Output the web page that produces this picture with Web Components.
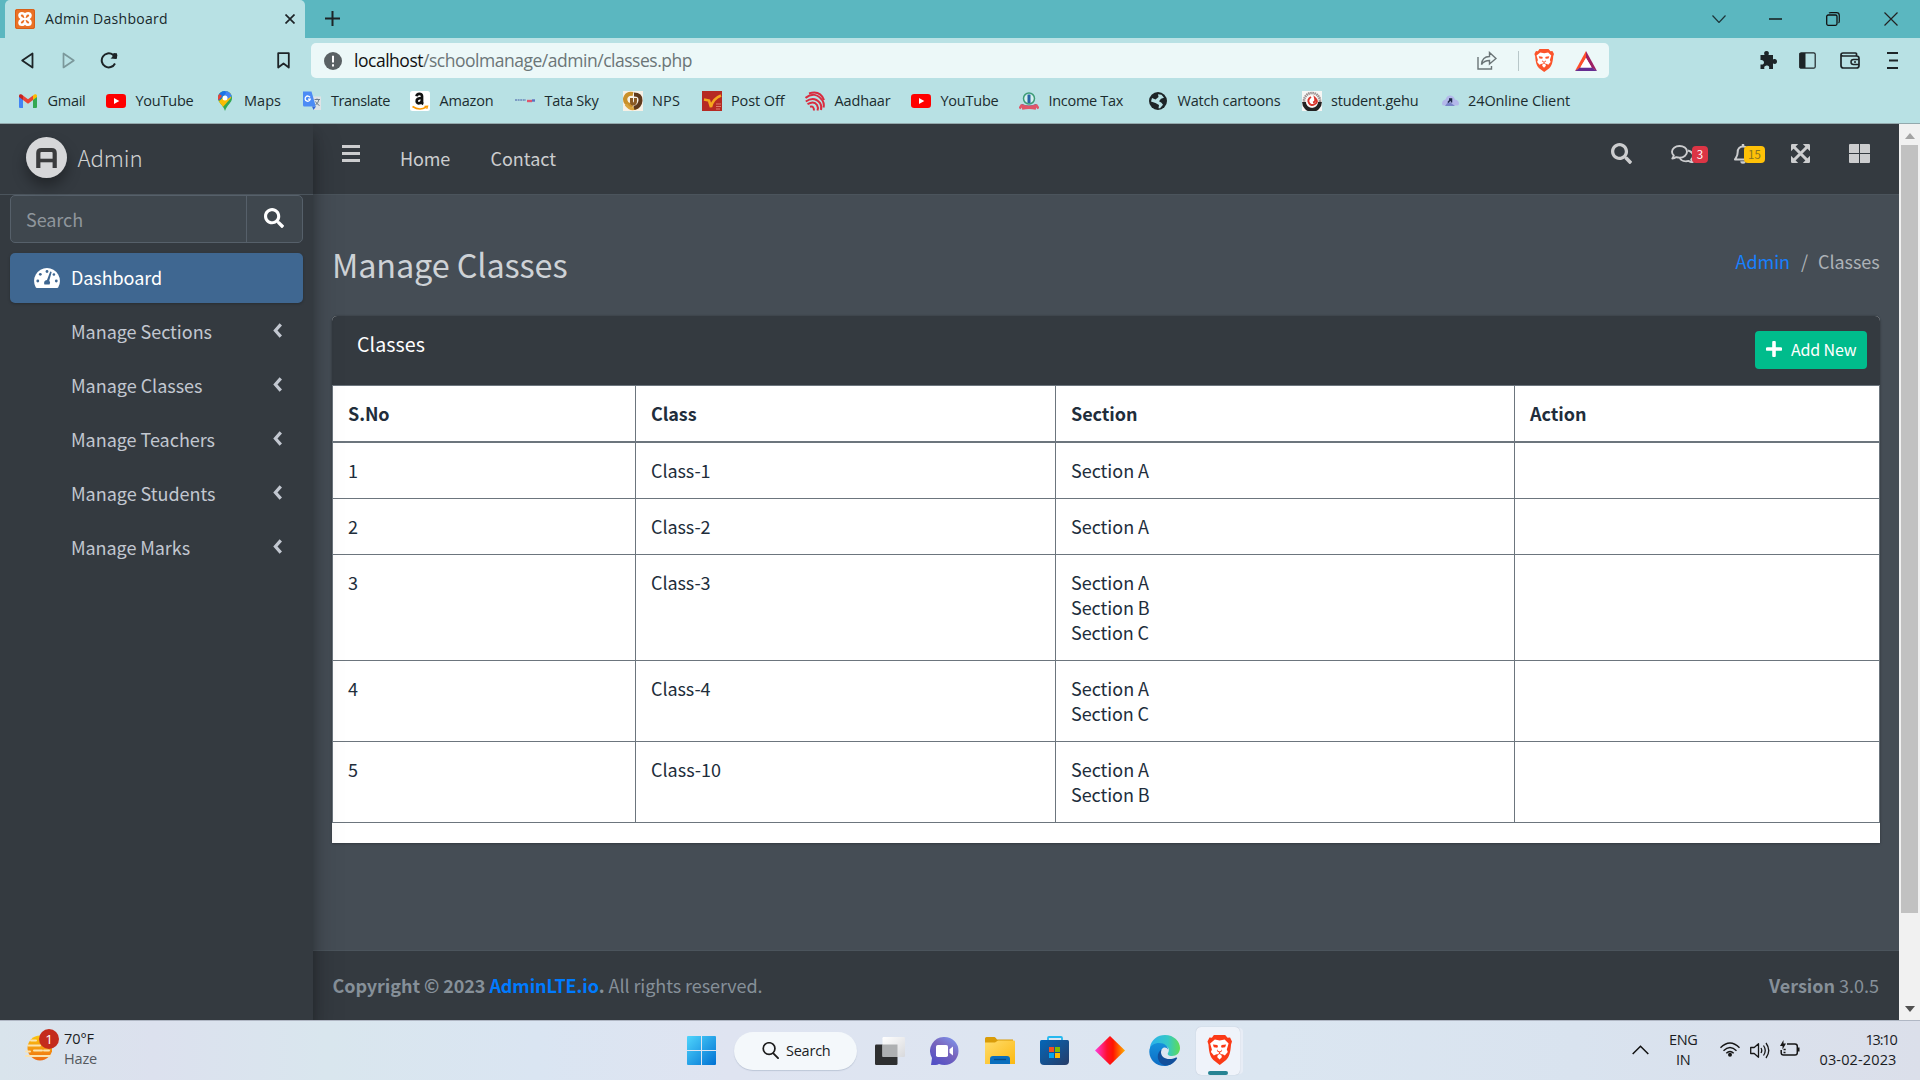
<!DOCTYPE html>
<html lang="en">
<head>
<meta charset="utf-8">
<title>Admin Dashboard</title>
<style>
html,body{margin:0;padding:0}
body{width:1920px;height:1080px;overflow:hidden;font-family:"Noto Sans CJK SC","Open Sans",sans-serif;font-size:18px;background:#454d55}
</style>
</head>
<body>
<desktop-screen></desktop-screen>
<script>
const UI = '"Open Sans","Noto Sans",sans-serif';

function define(name, css, html, after) {
  customElements.define(name, class extends HTMLElement {
    connectedCallback() {
      if (this.shadowRoot) return;
      const root = this.attachShadow({ mode: 'open' });
      root.innerHTML = '<style>:host{display:block;box-sizing:border-box}*{box-sizing:border-box}' + css + '</style>' +
        (typeof html === 'function' ? html(this) : html);
      if (after) after(this, root);
    }
  });
}

/* A single line of text tracked to an exact width. */
define('fit-text', ':host{display:inline-block;white-space:pre;flex:none}', '<span><slot></slot></span>', (el, root) => {
  const w = +el.getAttribute('w');
  const span = root.querySelector('span');
  const natural = span.getBoundingClientRect().width;
  span.style.letterSpacing = ((w - natural) / el.textContent.length).toFixed(3) + 'px';
  el.style.width = w + 'px';
});

const lion = (f) => `<path fill="${f}" d="M7 0h11.500l2.500 2.800 2.500-.3 2 4-1 3c-.5 8-2 12.500-5 15.500l-6.500 5-6.500-5c-3-3-4.500-7.500-5-15.500l-1-3 2-4 2.500.3z"/>
<path fill="#fff" d="M8 4.500l5 1 5-1 4 4-1.800 6 1 2.500-3 3.500-2.200-1.200-1.500 1.200.8 1.500-2.500 2.500-2.500-2.500.8-1.500-1.500-1.200L7 20.500 4 17l1-2.500-1.800-6z"/>
<path fill="${f}" d="M6 9.500l4.500.5.7 1.200-.7 1.600-3.500-.5zM19.500 9.500l-4.500.5-.7 1.200.7 1.600 3.500-.5zM10.800 14l-.8 2 2.800 1.800L15.500 16l-.8-2 .2 1.400-2.100 1.200-2.100-1.200z"/><path fill="none" stroke="${f}" stroke-width=".9" d="M12.800 17v2M9.500 20.200l3.300-1.500 3.300 1.500"/>`;

const icons = {
  xampp: ['0 0 20 20', '<rect width="20" height="20" rx="2" fill="#ea7125"/><rect x=".5" y=".5" width="19" height="19" rx="2" fill="none" stroke="#d65f18"/><path transform="rotate(90 10 10)" fill="none" stroke="#fff" stroke-width="2.600" d="M6.500 4.500C3.500 4.500 3.500 9 6.500 10c-3 1-3 5.500 0 5.500 2 0 2-1.500 3.500-3 1.500 1.500 1.500 3 3.500 3 3 0 3-4.500 0-5.500 3-1 3-5.500 0-5.500-2 0-2 1.500-3.500 3-1.500-1.500-1.500-3-3.500-3z"/><path stroke="#fff" stroke-width="2.200" d="M7.500 10h5"/>'],
  close: ['0 0 10 10', '<path stroke="#1d2427" stroke-width="1.700" d="M.5.5l9 9M9.500.5l-9 9"/>'],
  plus: ['0 0 15 15', '<path stroke="#1d2427" stroke-width="2" d="M7.500 0v15M0 7.500h15"/>'],
  chevDown: ['0 0 14 8', '<path fill="none" stroke="#1d3438" stroke-width="1.200" d="M.5.5L7 7.500 13.500.5"/>'],
  min: ['0 0 13 2', '<path stroke="#111" stroke-width="1.400" d="M0 1h13"/>'],
  max: ['0 0 14 14', '<rect x=".7" y="3" width="10.300" height="10.300" rx="1.500" fill="none" stroke="#111" stroke-width="1.300"/><path fill="none" stroke="#111" stroke-width="1.200" d="M3 1.200Q3.500.7 5 .7h5.500q2.800 0 2.800 2.800V9q0 1.500-.8 2"/>'],
  winX: ['0 0 14 14', '<path stroke="#222" stroke-width="1.200" d="M.5.5l13 13M13.500.5l-13 13"/>'],
  back: ['0 0 13 17', '<path fill="none" stroke="#1d2427" stroke-width="1.800" stroke-linejoin="round" d="M11.500 1.500v14L1.200 8.500z"/>'],
  fwd: ['0 0 13 17', '<path fill="none" stroke="#7b989b" stroke-width="1.700" stroke-linejoin="round" d="M1.500 1.500v14L11.800 8.500z"/>'],
  reload: ['0 0 18 17', '<path fill="none" stroke="#1d2427" stroke-width="2" d="M13 2.800A7 7 0 1 0 15 11.500"/><path fill="#1d2427" d="M10.500 6.500L17 1v5q0 1-1 1z"/><circle cx="14.800" cy="3.600" r="2.500" fill="#1d2427"/>'],
  mark: ['0 0 13 17', '<path fill="none" stroke="#1d2427" stroke-width="1.800" stroke-linejoin="round" d="M1.200 1.200h10.600v14.300L6.500 11.500 1.200 15.500z"/>'],
  info: ['0 0 18 18', '<circle cx="9" cy="9" r="9" fill="#5a6164"/><path stroke="#fff" stroke-width="2" d="M9 3.800v6.700M9 12.200v2.200"/>'],
  share: ['0 0 20 19', '<path fill="none" stroke="#6b7577" stroke-width="1.400" d="M1 6v12h13.500v-3M4.500 13.500C5 8 8 5.500 12.500 5.500V1.500L19 7.500l-6.500 5.500V9.500c-3.500 0-6 1-8 4z"/>'],
  bat: ['0 0 22 20', '<path fill="#ff4f2b" d="M11 0v7L5 17l-5 3z"/><path fill="#9e1f63" d="M11 0l11 20-5-3-6-10z"/><path fill="#662d91" d="M0 20l5-3.500h12l5 3.500z"/><path fill="#fff" d="M11 7l5.500 9.500h-11z"/>'],
  puzzle: ['0 0 18 18', '<path fill="#1d2427" d="M1.500 4H5.500C4.500 1.500 5.500 0 7.500 0s3 1.500 2 4H14v4.500c2.500-1 4 0 4 2s-1.500 3-4 2V18h-4c.8-2.500-.5-3.500-2-3.500S4.500 15.500 5.500 18h-4v-4.500C4 14 5 12.800 5 11.300S3.500 8.500 1.500 9z"/>'],
  panel: ['0 0 17 17', '<rect x=".8" y=".8" width="15.400" height="15.400" rx="1.500" fill="none" stroke="#1d2427" stroke-width="1.200"/><path fill="#1d2427" d="M.5 1h6v15h-6z"/>'],
  wallet: ['0 0 20 17', '<path fill="none" stroke="#1d2427" stroke-width="1.700" stroke-linejoin="round" d="M16.500 4V2q0-1-1-1H3Q1 1 1 3v10.500q0 2.500 2.500 2.500h13q2.500 0 2.500-2.500V6.500Q19 4 16.500 4H3Q1 4 1 2.700"/><path fill="none" stroke="#1d2427" stroke-width="1.500" d="M19 7.500h-5.500q-2.500 0-2.500 2.500t2.500 2.500H19"/><path stroke="#1d2427" stroke-width="1.500" d="M14 10h2"/>'],
  menu: ['0 0 11 17', '<path stroke="#1d2427" stroke-width="1.800" d="M0 1h11M2 8.500h9M0 16h11"/>'],
  brave: ['0 0 25.500 30', lion('#fb542b')],
  gmail: ['0 0 18 14', '<path fill="#4285f4" d="M0 2v11q0 1 1 1h3V5z"/><path fill="#34a853" d="M18 2v11q0 1-1 1h-3V5z"/><path fill="#fbbc04" d="M14 6V1.500C15.500-.3 18-.3 18 2v1z"/><path fill="#c5221f" d="M4 6V1.500C2.500-.3 0-.3 0 2v1z"/><path fill="#ea4335" d="M4 1.500L9 5.300l5-3.800V6L9 9.800 4 6z"/>'],
  youtube: ['0 0 20 14', '<rect width="20" height="14" rx="3.200" fill="#f00"/><path fill="#fff" d="M8 4l5.300 3L8 10z"/>'],
  maps: ['0 0 14 20', '<defs><clipPath id="m"><path d="M7 0C3 0 0 3 0 7c0 5 5 6.500 7 13 2-6.500 7-8 7-13 0-4-3-7-7-7z"/></clipPath></defs><g clip-path="url(#m)"><path fill="#34a853" d="M0 0h14v20H0z"/><path fill="#fbbc04" d="M0 11L13 0v7L4 17z"/><path fill="#4285f4" d="M5 0h9v5l-6 4z"/><path fill="#1a73e8" d="M0 0h7l1 2-6 7H0z"/><path fill="#ea4335" d="M0 2l4 3-4 5z"/></g><circle cx="7" cy="7" r="2.500" fill="#fff"/>'],
  translate: ['0 0 20 20', '<path fill="#dfe3e6" d="M8 5.500h11V19H11z"/><path fill="#4c8bf5" d="M1 .5h8.500l4.300 15H2.300Q1 15.500 1 14z"/><path fill="#3367d6" d="M10 15.500h4L11.500 19z"/><path fill="none" stroke="#fff" stroke-width="1.300" d="M8 6.300A2.600 2.600 0 1 0 8.300 8.200H6"/><path fill="none" stroke="#6d7b8a" stroke-width="1" d="M12.500 8.500h5.500M15 7.500v1M17 8.500q-1 4-3.500 5.500M13.500 10.500q1.500 3 4 4"/>'],
  amazon: ['0 0 20 20', '<rect width="20" height="20" rx="2.500" fill="#fff"/><path fill="none" stroke="#111" stroke-width="2.700" d="M6.500 5.300C7 2 12 2 12 5v6q0 1.500 1.300 2M12 7C8 7 6.500 8.500 6.700 10.300c.2 3 4.800 2.700 5.300-1.300"/><path fill="none" stroke="#f90" stroke-width="1.600" d="M2.500 15.500q7 4.500 13.500.8"/><path stroke="#f90" stroke-width="1.400" fill="none" d="M14.500 15.500l3-.2-.8 2.500"/>'],
  tata: ['0 0 20 5', '<path stroke="#7d9cc4" stroke-width="2" stroke-dasharray="2 .6" d="M0 2h11"/><path stroke="#e0566d" stroke-width="2.400" d="M12 3h5"/><path stroke="#5b6fc0" stroke-width="2.400" d="M17 2.500h3"/>'],
  nps: ['0 0 20 20', '<rect width="20" height="20" fill="#f7f1e6"/><path fill="none" stroke="#c9902a" stroke-width="4.200" d="M10 3C3 1.500.5 8 3.500 12q2.500 3 6 1.500"/><path fill="none" stroke="#d9a33c" stroke-width="3" d="M3 13.500Q8 20.500 15 16"/><path fill="none" stroke="#5f3a1c" stroke-width="4" d="M11 3.500q7 0 6.500 6T11 17"/><path fill="none" stroke="#8a5a24" stroke-width="3" d="M8.500 7v4q0 2.500 2 2t2-3V7"/>'],
  post: ['0 0 20 20', '<rect width="20" height="20" fill="#b62a23"/><path fill="none" stroke="#f4a61e" stroke-width="2.600" d="M2 8.500l5 1 2 6.500C10 11 14 6.500 19 4.500"/><path stroke="#de7b6d" d="M14 13h5M14 15.500h5M14 18h4"/>'],
  aadhaar: ['0 0 20 20', '<g fill="none" stroke="#d92c3f" stroke-width="2"><path d="M4 2.500Q15-1 19 9"/><path d="M.5 7Q10-.5 17.500 9.500q2 3.500 1 7"/><path d="M.8 10.500Q9 5 15 12q2 3 1 7"/><path d="M2.500 13.200Q9 9.500 12 14q1.500 2.500.5 5.500"/><path d="M5 15.800q4-1.200 4 3.700"/></g>'],
  tax: ['0 0 20 18', '<circle cx="10" cy="6.500" r="5.500" fill="#d6f0ee" stroke="#3d9c77" stroke-width="1.500"/><path stroke="#2764a5" stroke-width="3" d="M10 2.500v8.500"/><path fill="none" stroke="#4a5a9c" stroke-width="1.300" d="M3 12.500q7 3.500 14 0"/><path fill="none" stroke="#e05568" stroke-width="2.600" d="M.5 16.500l2-3q7.500 3 15 0l2 3M3 16.500q7-1.500 14 0"/>'],
  globe: ['0 0 18 18', '<circle cx="9" cy="9" r="9" fill="#1d2427"/><path fill="#b8e1e4" d="M9 2.200l3.500.6 2.500 3-3 1-2 2.500 2.500 1.500 1.500 2-3 3.500H9.500L10 13 6.500 11 2 9.500 3 6l3.500 1.500L9.500 5z"/>'],
  gehu: ['0 0 20 20', '<rect width="20" height="20" fill="#f6f6f4"/><circle cx="10" cy="10" r="8" fill="none" stroke="#9a8f8f" stroke-width="2.600" stroke-dasharray="1.500 .6"/><path fill="none" stroke="#222" stroke-width="3.800" d="M2 11a8 8 0 0 0 16 0"/><circle cx="10" cy="10" r="5.200" fill="#fff"/><path fill="none" stroke="#d8342b" stroke-width="1.900" d="M9 6q-4 2.500-2 6t6 1 0-6q1 4-2 4.500"/>'],
  online: ['0 0 18 11', '<path fill="#b3b8ea" d="M1 9q0-4 3.500-4.500Q6 0 9.500.5t4.500 4q4 .5 4 4.500 0 1.500-2 1.500H3q-2 0-2-1.500z"/><path fill="#7984c8" d="M4 11l3-4 3 1 4 3z"/><path fill="none" stroke="#1d2849" stroke-width="1.500" d="M7 7.500l3.500-4M8 4h2.500v3.500"/>'],
  lte: ['0 0 41 41', '<circle cx="20.500" cy="20.500" r="20.500" fill="#d6d7d9"/><path fill="none" stroke="#3a3b3d" stroke-width="4.200" d="M12.300 31V16q0-3 3-3h10.400q3 0 3 3v15"/><path fill="none" stroke="#3a3b3d" stroke-width="3.600" d="M12 23.500h17"/>'],
  search: ['0 0 512 512', '<path fill="currentColor" d="M505 442.700L405.300 343c-4.500-4.500-10.600-7-17-7H372c27.600-35.300 44-79.700 44-128C416 93.100 322.900 0 208 0S0 93.100 0 208s93.100 208 208 208c48.300 0 92.700-16.400 128-44v16.300c0 6.400 2.500 12.500 7 17l99.700 99.700c9.400 9.400 24.600 9.400 33.900 0l28.300-28.300c9.400-9.400 9.400-24.600.1-34zM208 336c-70.700 0-128-57.200-128-128 0-70.700 57.200-128 128-128 70.700 0 128 57.200 128 128 0 70.700-57.200 128-128 128z"/>'],
  tach: ['0 0 26 20', '<path fill="#fff" d="M13 0a13 13 0 0 0-11.300 19.300q.4.700 1.200.7h20.200q.8 0 1.200-.7A13 13 0 0 0 13 0z"/><g fill="#3f6791"><circle cx="13" cy="3.500" r="1.400"/><circle cx="6.300" cy="6.300" r="1.400"/><circle cx="3.800" cy="13" r="1.400"/><circle cx="19.900" cy="6.500" r="1.300"/><circle cx="22.300" cy="13" r="1.400"/><path d="M16.200 3.600l1.500.5-2.400 8.300q1.500 1.800.3 4.100h-5.200q-1.300-3.700 2.600-4.600z"/></g>'],
  left: ['0 0 9 15', '<path fill="none" stroke="#c2c7d0" stroke-width="3.200" d="M7.800 1.400L2.400 7.500l5.400 6.100"/>'],
  bars: ['0 0 18 17', '<path fill="currentColor" d="M0 0h18v3H0zM0 7h18v3H0zM0 14h18v3H0z"/>'],
  comments: ['0 0 23 18', '<g fill="none" stroke="currentColor" stroke-width="1.900" stroke-linejoin="round"><path d="M8.500 1C4.300 1 1 3.500 1 6.700c0 1.500.7 2.800 1.800 3.800-.3 1.300-.9 2.200-1.500 3 1.800 0 3-.6 4-1.400 1 .3 2 .5 3.200.5 4.200 0 7.500-2.600 7.500-5.900S12.700 1 8.500 1z"/><path d="M17 5.500c3 .8 5 2.700 5 5.200 0 1.500-.7 2.800-1.800 3.800.3 1.200.9 2 1.500 2.700-1.700 0-3-.5-4-1.300-3.700 1-7.500-.2-9-2.800"/></g>'],
  bell: ['0 0 18 20', '<path fill="none" stroke="currentColor" stroke-width="2" stroke-linejoin="round" d="M9 2.500c-3.500 0-5.300 2.500-5.300 5.500 0 4.500-1.700 5.500-2.700 7.500h16c-1-2-2.700-3-2.700-7.500 0-3-1.800-5.500-5.300-5.500z"/><path fill="currentColor" d="M7.800 0h2.400v3H7.800zM6.300 17.300h5.400a2.700 2.500 0 0 1-5.400 0z"/>'],
  expand: ['0 0 19 19', '<path stroke="currentColor" stroke-width="3" d="M3 3l13 13M16 3L3 16"/><path fill="currentColor" d="M0 1.200Q0 0 1.200 0h6L0 7.200zM19 1.200Q19 0 17.800 0h-6L19 7.200zM0 17.800Q0 19 1.200 19h6L0 11.800zM19 17.800Q19 19 17.800 19h-6l7.200-7.200z"/>'],
  large: ['0 0 21 19', '<path fill="currentColor" d="M0 1q0-1 1-1h9v9H0zM11 0h9q1 0 1 1v8H11zM0 10h10v9H1q-1 0-1-1zM11 10h10v8q0 1-1 1h-9z"/>'],
  add: ['0 0 16 16', '<path stroke="#fff" stroke-width="3.600" stroke-linecap="round" d="M8 1.500v13M1.500 8h13"/>'],
  up: ['0 0 10 6', '<path fill="#a3a3a3" d="M5 0l5 6H0z"/>'],
  down: ['0 0 10 6', '<path fill="#505050" d="M0 0h10L5 6z"/>'],
  haze: ['0 0 27 26', '<defs><linearGradient id="h" x2="0" y2="1"><stop stop-color="#fbc70f"/><stop offset="1" stop-color="#ee6b12"/></linearGradient></defs><circle cx="15" cy="13" r="12.500" fill="url(#h)"/><g stroke="#fae3b0" stroke-width="2" stroke-linecap="round"><path d="M6 5.500h5M3 10.500h12M1 16.500h4M9 15.500h8M19 15.500h5M1 21h24"/></g>'],
  win: ['0 0 29 29', '<defs><linearGradient id="w" x2="1" y2="1"><stop stop-color="#4fd5fc"/><stop offset="1" stop-color="#0071d3"/></linearGradient></defs><path fill="url(#w)" d="M1 0h13v14H0V1q0-1 1-1zM15 0h13q1 0 1 1v13H15zM0 15h14v14H1q-1 0-1-1zM15 15h14v13q0 1-1 1H15z"/>'],
  mag: ['0 0 18 18', '<circle cx="7.500" cy="7" r="6.200" fill="none" stroke="#1c1c1c" stroke-width="1.800"/><path stroke="#1c1c1c" stroke-width="2" stroke-linecap="round" d="M12 12l5 5"/>'],
  task: ['0 0 30 28', '<defs><linearGradient id="t" x2="1" y2="1"><stop stop-color="#fff"/><stop offset="1" stop-color="#d8d9dc"/></linearGradient></defs><rect y="7.500" width="22.500" height="20.500" rx="1.200" fill="#2e2f30"/><rect x="7.500" width="22.500" height="20" rx="1.200" fill="url(#t)"/><path fill="#aeb0b2" d="M7.500 7.500h15V20h-15z"/>'],
  chat: ['0 0 29 28', '<defs><linearGradient id="c" x1="1" x2=".3" y2="1"><stop stop-color="#7e9df5"/><stop offset=".5" stop-color="#7a66bd"/><stop offset="1" stop-color="#5350c5"/></linearGradient></defs><path fill="url(#c)" d="M14.500 0A14 14 0 0 1 14.500 28q-3 0-5.500-1-3 1.500-8 1l1-7A14 14 0 0 1 14.500 0z"/><rect x="6" y="8" width="12" height="12" rx="1.800" fill="#fff"/><path fill="#fff" d="M19.500 12.200l3.500-2.700v9l-3.500-2.700z"/>'],
  folder: ['0 0 30 27', '<defs><linearGradient id="f" x2="1" y2="1"><stop stop-color="#ffdc6b"/><stop offset="1" stop-color="#fcb912"/></linearGradient></defs><path fill="#d99c09" d="M0 1.500Q0 0 1.500 0h8q1 0 2.500 2.500H28v6H0z"/><path fill="url(#f)" d="M0 5.500h10l3-2h16q1 0 1 1V27H0z"/><path fill="#0a6ebd" d="M5 27v-5q0-3 3-3h14q3 0 3 3v5z"/><path stroke="#064a86" stroke-width="1.300" d="M9 22.500h12"/>'],
  store: ['0 0 29 29', '<defs><linearGradient id="s" x2="1" y2="1"><stop stop-color="#0467b9"/><stop offset="1" stop-color="#263c68"/></linearGradient></defs><path fill="none" stroke="#25b8ef" stroke-width="1.800" d="M8 5V2q0-1 1-1h12q1 0 1 1v3"/><path fill="url(#s)" d="M0 5.500Q0 4 1.500 4h26Q29 4 29 5.500V25q0 4-4 4H4q-4 0-4-4z"/><path fill="#f25022" d="M9 11h5v5H9z"/><path fill="#7fba00" d="M15 11h5v5h-5z"/><path fill="#00a4ef" d="M9 17h5v5H9z"/><path fill="#ffb900" d="M15 17h5v5h-5z"/>'],
  diamond: ['0 0 30 29', '<defs><linearGradient id="d"><stop stop-color="#ff3ce0"/><stop offset=".4" stop-color="#ff1030"/><stop offset=".6" stop-color="#ff1500"/><stop offset="1" stop-color="#ffb000"/></linearGradient></defs><path fill="url(#d)" d="M15 0l15 14.500L15 29 0 14.500z"/>'],
  edge: ['0 0 31 31', '<defs><linearGradient id="e1"><stop stop-color="#2bb1ee"/><stop offset=".6" stop-color="#34c8c6"/><stop offset="1" stop-color="#5fdc55"/></linearGradient><linearGradient id="e2" x2="0" y2="1"><stop stop-color="#1591dc"/><stop offset="1" stop-color="#0d6cc4"/></linearGradient></defs><path fill="url(#e1)" d="M1 12C2.500 4.500 8.500 0 16 0c9 0 15 6.500 15 13 0 5-3.500 8-8 8-3.500 0-5-1.500-4-3 2-3 .5-7-4-7.500C9 10 3 10 1 15z"/><path fill="url(#e2)" d="M.3 17C0 10 6 8 10 8c6 0 9 3.500 9 6.500-1.500-3-7-3-7 3 0 6.500 6 11 14 7.500C23 29.500 19 31 15.500 31 7 31 .6 25 .3 17z"/><path fill="#124f9b" d="M12.500 14.500c-4 2.500-5.500 9-1 13.500 4 4 12 3 16.500-4.500.5-1-.3-1.300-1-1C19.500 26 12 23 12 17.500q0-2 .5-3z"/>'],
  bravetb: ['0 0 25.500 30', lion('#fb3a17')],
  trayUp: ['0 0 17 10', '<path fill="none" stroke="#111" stroke-width="1.500" d="M.7 9L8.500 1.200 16.300 9"/>'],
  wifi: ['0 0 20 15', '<g fill="none" stroke="#161616" stroke-width="1.400"><path d="M.5 5.800Q10-3.800 19.500 5.800"/><path d="M3.500 8.800q6.500-6.600 13 0"/><path d="M6.300 11.300q3.700-3.700 7.400 0"/></g><circle cx="10" cy="12.800" r="2" fill="#161616"/>'],
  vol: ['0 0 20 17', '<g fill="none" stroke="#161616" stroke-width="1.300" stroke-linejoin="round"><path d="M.7 5.500h3.500L8.500 1.700v13.600l-4.300-3.800H.7z"/><path d="M11 6q1.500 2.500 0 5M13.500 3.500q3.500 5 0 10M16 1q5.500 7.500 0 15"/></g>'],
  batt: ['0 0 20 17', '<path fill="none" stroke="#161616" stroke-width="1.500" d="M7 4h8q2.300 0 2.300 2.300v6.500q0 2.300-2.300 2.300H3.500q-2.300 0-2.300-2.300V10"/><path fill="#161616" d="M18 7.500h1.500v4H18zM3.500 0v3.500H6L2.500 9.500V6H0z"/><path stroke="#161616" stroke-width="1.500" d="M3.500 9.500h2.200M3.500 12.500h2"/>']
};

define('ui-icon', ':host{display:inline-block;flex:none;line-height:0}svg{display:block}', el => {
  const [box, body] = icons[el.getAttribute('name')];
  return `<svg width="${el.getAttribute('w')}" height="${el.getAttribute('h')}" viewBox="${box}" preserveAspectRatio="none">${body}</svg>`;
});
const ic = (n, w, h, s = '') => `<ui-icon name="${n}" w="${w}" h="${h}" style="${s}"></ui-icon>`;

define('tab-strip', `:host{display:flex;height:38px;background:#5bb7c0;padding-left:5px;font:14px/30px ${UI};color:#17282b}
.tab{width:300px;display:flex;background:#b8e1e4;border-radius:5px 5px 0 0;padding:0 10px 0;align-items:center;height:38px}
.tab>*{margin-bottom:1px}
.ctl{margin-left:auto;display:flex;align-items:center;padding:0 22px 1px 0}`,
`<div class="tab">${ic('xampp', 20, 20)}<fit-text w="123" style="margin-left:10px">Admin Dashboard</fit-text>${ic('close', 10, 10, 'margin-left:auto')}</div>
${ic('plus', 15, 15, 'margin:11px 0 0 20px')}
<div class="ctl">${ic('chevDown', 14, 8)}${ic('min', 13, 2, 'margin-left:43px')}${ic('max', 14, 14, 'margin-left:44px')}${ic('winX', 14, 14, 'margin-left:44px')}</div>`);

define('tool-bar', `:host{display:flex;align-items:center;height:44px;background:#b8e1e4;padding:0 22px 0 21px}
.url{margin-left:21px;width:1298px;height:35px;border-radius:5px;background:#ecf8f8;display:flex;align-items:center;padding:0 12px 0 13px;font:17.500px/34px ${UI};color:#6b7577;margin-top:1px}
b{font-weight:400;color:#111}i{width:1px;height:20px;background:#b8c7c9;margin:0 15px 0 21px}
.url fit-text{margin:-1px 0 0 12px}
.r{display:flex;align-items:center;margin-left:auto}`,
`${ic('back', 13, 17)}${ic('fwd', 13, 17, 'margin-left:28px')}${ic('reload', 18, 17, 'margin-left:25px')}${ic('mark', 13, 17, 'margin-left:159px')}
<div class="url">${ic('info', 18, 18)}<fit-text w="338"><b>localhost</b>/schoolmanage/admin/classes.php</fit-text>${ic('share', 20, 19, 'margin-left:auto')}<i></i>${ic('brave', 20, 23)}${ic('bat', 22, 20, 'margin-left:21px')}</div>
<div class="r">${ic('puzzle', 18, 18)}${ic('panel', 17, 17, 'margin-left:22px')}${ic('wallet', 20, 17, 'margin-left:24px')}${ic('menu', 11, 17, 'margin-left:27px')}</div>`);

define('book-mark', `:host{display:flex;align-items:center;flex:none}span{width:20px;display:flex;justify-content:center;margin-right:9.500px}`,
  '<span><slot name="icon"></slot></span><slot></slot>');

const marks = [['gmail',18,14,'Gmail',38,18],['youtube',20,14,'YouTube',58,106],['maps',14,20,'Maps',37,214.500],['translate',20,20,'Translate',59,301.500],['amazon',20,20,'Amazon',54,410],['tata',20,5,'Tata Sky',54,515],['nps',20,20,'NPS',28,622.500],['post',20,20,'Post Off',53.500,701.500],['aadhaar',20,20,'Aadhaar',56,805],['youtube',20,14,'YouTube',58,911],['tax',20,18,'Income Tax',74.500,1019],['globe',18,18,'Watch cartoons',103,1148],['gehu',20,20,'student.gehu',87.500,1301.500],['online',18,11,'24Online Client',102,1440.500]];
define('bookmark-bar', `:host{display:flex;height:42px;background:#b8e1e4;padding:0 0 4px 18px;border-bottom:1px solid #93a9ad;font:14.500px/26px ${UI};color:#1b2c2f}`,
  marks.map(([n, w, h, t, tw, x], i) => `<book-mark style="width:${((marks[i + 1] || [, , , , , 1560])[5] - x)}px">${ic(n, w, h).replace('<ui-icon', '<ui-icon slot="icon"')}<fit-text w="${tw}">${t}</fit-text></book-mark>`).join(''));

define('side-link', `:host{display:flex;align-items:center;height:50px;margin:0 10px 4px;padding:0 21px 2px 24px;border-radius:5px;color:#c2c7d0;line-height:30px}
:host([active]){background:#3f6791;color:#fff;box-shadow:0 1px 3px rgba(0,0,0,.24)}span{width:37px;display:flex}.c{margin-left:auto;display:flex;padding-bottom:2px}`,
  el => `<span><slot name="icon"></slot></span><slot></slot>${el.hasAttribute('active') ? '' : `<div class="c">${ic('left', 9, 15)}</div>`}`);

define('side-bar', `:host{width:313px;background:#343a40;box-shadow:0 14px 28px rgba(0,0,0,.25),0 10px 10px rgba(0,0,0,.22);position:relative;z-index:2;clip-path:inset(0 -45px 0 0);color:#c2c7d0}
.brand{height:71px;border-bottom:1px solid #4b545c;display:flex;align-items:center;padding:0 0 3px 26px;color:#d0d1d2}
.brand ui-icon{border-radius:50%;box-shadow:0 8px 14px rgba(0,0,0,.35);margin-right:10.500px}
.brand fit-text{font-size:22.300px;font-weight:300;margin-top:-2px}
.find{margin:0 10px 10px;height:48px;border:1px solid #56606a;border-radius:5px;background:#3f474e;display:flex;align-items:center;padding-left:15px;color:#8f969c}
.find div{margin-left:auto;width:56px;height:46px;border-left:1px solid #56606a;color:#fff;display:flex;align-items:center;justify-content:center}`,
`<div class="brand">${ic('lte', 41, 41)}<fit-text w="65">Admin</fit-text></div>
<div class="find"><fit-text w="57">Search</fit-text><div>${ic('search', 20, 20, 'margin:0 2px 2px 0')}</div></div>
<side-link active>${ic('tach', 26, 20, 'margin-top:1px').replace('<ui-icon', '<ui-icon slot="icon"')}<fit-text w="91">Dashboard</fit-text></side-link>` +
[['Sections', 141], ['Classes', 131.500], ['Teachers', 144], ['Students', 144.500], ['Marks', 119]].map(([t, w]) => `<side-link><fit-text w="${w}">Manage ${t}</fit-text></side-link>`).join(''));

define('count-badge', ':host{display:block;position:absolute;top:0;height:17px;border-radius:4px;font-size:11.500px;line-height:17px;text-align:center}', '<slot></slot>');

define('nav-bar', `:host{display:flex;height:71px;background:#343a40;border-bottom:1px solid #4b545c;color:#cccdcf;align-items:flex-start;padding:0 29px 0 29px;line-height:30px}
fit-text{margin-top:19px}.r{margin-left:auto;display:flex;padding-top:19px;align-items:center;height:39px}.b{position:relative;height:19px;display:flex}`,
`${ic('bars', 18, 17, 'margin-top:21px')}<fit-text w="50" style="margin-left:40px">Home</fit-text><fit-text w="65.500" style="margin-left:40.500px">Contact</fit-text>
<div class="r">${ic('search', 21, 21)}
<div class="b" style="margin-left:39px">${ic('comments', 23, 18, 'margin-top:1px')}<count-badge style="left:21px;width:16px;top:2px;background:#dc3545;color:#fff">3</count-badge></div>
<div class="b" style="margin-left:40px">${ic('bell', 18, 20)}<count-badge style="left:10px;width:21px;top:2px;background:#ffc107;color:#8a7420">15</count-badge></div>
${ic('expand', 19, 19, 'margin-left:39px')}${ic('large', 21, 19, 'margin-left:39px')}</div>`);

define('page-title', `:host{display:flex;justify-content:space-between;height:121px;padding:45px 19.500px 0 19px;color:#ced2d6}
.h{font-size:32.400px;line-height:48px;height:48px}.c{padding-top:6px;line-height:30px;color:#adb2b7;display:flex}`,
`<fit-text class="h" w="235.500">Manage Classes</fit-text>
<div class="c"><fit-text w="54.500" style="color:#1780ff">Admin</fit-text><fit-text w="7.500" style="margin-left:11px">/</fit-text><fit-text w="61.500" style="margin-left:9.500px">Classes</fit-text></div>`);

define('add-button', ':host{display:flex;align-items:center;width:112px;height:38px;border-radius:4px;background:#00bc8c;color:#fff;font-size:16px;line-height:24px;padding:0 0 2px 11px;margin-top:15px}',
  `${ic('add', 16, 16)}<slot></slot>`);

define('data-row', `:host{display:grid;grid-template-columns:303px 420px 459px 366px;border-bottom:1px solid #6c757d;line-height:25px;color:#212d3b}
:host([head]){border-bottom-width:2px;font-weight:700}
div{border-left:1px solid #6c757d;padding:15px 0 15px 15px;min-height:55px}div:last-child{border-right:1px solid #6c757d}p{margin:0;height:25px}`,
  el => el.getAttribute('cells').split('|').map(c => '<div>' + c.split(';').map(s => {
    if (!s) return '';
    const [t, w] = s.split('@');
    return `<p><fit-text w="${w}">${t}</fit-text></p>`;
  }).join('') + '</div>').join(''));

define('class-card', `:host{margin:0 19px;width:1548px;background:#fff;height:527px;border-radius:5px 5px 0 0;box-shadow:0 0 2px rgba(0,0,0,.2),0 1px 3px rgba(0,0,0,.2)}
.top{height:69px;background:#343a40;border-radius:5px 5px 0 0;display:flex;justify-content:space-between;padding:0 13px 0 25px;color:#fff}
.t{font-size:19.600px;line-height:30px;height:30px;margin-top:13px}.g{border-top:1px solid #6c757d}`,
`<div class="top"><fit-text class="t" w="68">Classes</fit-text><add-button><fit-text w="65.500" style="margin-left:9px">Add New</fit-text></add-button></div>
<div class="g"><data-row head cells="S.No@41.500|Class@45.500|Section@66.500|Action@56.500"></data-row>
<data-row cells="1@10|Class-1@59.500|Section A@78|"></data-row>
<data-row cells="2@10|Class-2@59.500|Section A@78|"></data-row>
<data-row cells="3@10|Class-3@59.500|Section A@78;Section B@78.500;Section C@78|"></data-row>
<data-row cells="4@10|Class-4@59.500|Section A@78;Section C@78|"></data-row>
<data-row cells="5@10|Class-10@70|Section A@78;Section B@78.500|"></data-row></div>`);

define('page-footer', ':host{display:flex;justify-content:space-between;height:70px;margin-top:auto;background:#343a40;border-top:1px solid #4b545c;color:#869099;padding:19px 20px 0 19.500px;line-height:30px}b{font-weight:700}span{color:#007bff}',
`<fit-text w="430"><b>Copyright © 2023 <span>AdminLTE.io</span>.</b> All rights reserved.</fit-text><fit-text w="110"><b>Version</b> 3.0.5</fit-text>`);

define('scroll-bar', ':host{display:flex;flex-direction:column;align-items:center;width:21px;background:#f1f1f1;padding:9px 0 8px}div{width:17px;height:768px;background:#c1c1c1;margin-top:6px}',
  `${ic('up', 10, 6)}<div></div>${ic('down', 10, 6, 'margin-top:auto')}`);

define('task-bar', `:host{display:flex;height:60px;border-top:1px solid #b0b7c4;background:linear-gradient(90deg,#d9e4ec,#dce1ee 8%,#d9e6ee 17%,#dae5f2 28%,#dfe4f1 38%,#dbe6f1 66%,#d9e3ef 82%,#dbdfea);font:14.500px/20px ${UI};color:#1a1c1f;align-items:center;padding-right:23.500px}
.w{width:687px;display:flex;padding-left:25px}.wi{position:relative;width:39px;height:40px;padding-top:4px}.wi b{position:absolute;left:14px;top:-2px;width:20px;height:20px;border-radius:50%;background:#c42b1c;color:#fff;font-weight:400;text-align:center;font-size:13.500px}
.col{display:flex;flex-direction:column;margin-top:-2px}.pill{width:123px;height:38px;border-radius:19px;background:#f4f8fb;margin:0 18px;display:flex;align-items:center;padding-left:28px;box-shadow:0 1px 1px rgba(90,110,140,.25)}
.on{width:44px;height:48px;border-radius:5px;background:#eff3fa;box-shadow:0 0 1px #a9b3c4,4px 0 0 -1px #e8edf6;margin-left:16px;display:flex;flex-direction:column;align-items:center;padding-top:8px}.on ui-icon{margin-left:2px}.on i{width:20px;height:4px;border-radius:2px;background:#268393;margin-top:6px}
.tray{display:flex;align-items:center;margin-left:auto}`,
`<div class="w"><div class="wi">${ic('haze', 27, 26)}<b>1</b></div><div class="col"><fit-text w="30">70°F</fit-text><fit-text w="33" style="color:#55595e">Haze</fit-text></div></div>
${ic('win', 29, 29)}<div class="pill">${ic('mag', 17, 17)}<fit-text w="44.500" style="margin-left:7px">Search</fit-text></div>
${ic('task', 30, 28)}${ic('chat', 29, 28, 'margin-left:25px')}${ic('folder', 30, 27, 'margin-left:26px')}${ic('store', 29, 29, 'margin-left:25px')}${ic('diamond', 30, 29, 'margin-left:26px')}${ic('edge', 31, 31, 'margin-left:24px')}
<div class="on">${ic('bravetb', 25, 30)}<i></i></div>
<div class="tray">${ic('trayUp', 17, 10, 'margin-bottom:2px')}<div class="col" style="align-items:center;margin-left:20px"><fit-text w="28.500">ENG</fit-text><fit-text w="14.500">IN</fit-text></div>
${ic('wifi', 20, 15, 'margin:0 0 2px 22px')}${ic('vol', 20, 17, 'margin:0 0 1px 10px')}${ic('batt', 20, 17, 'margin:0 0 4px 10px')}
<div class="col" style="align-items:flex-end;margin-left:20px"><fit-text w="31">13:10</fit-text><fit-text w="77">03-02-2023</fit-text></div></div>`);

define('desktop-screen', `:host{display:flex;flex-direction:column;width:1920px;height:1080px}
.page{display:flex;height:896px}.main{flex:1;display:flex;flex-direction:column;background:#454d55}`,
`<tab-strip></tab-strip><tool-bar></tool-bar><bookmark-bar></bookmark-bar>
<div class="page"><side-bar></side-bar><div class="main"><nav-bar></nav-bar><page-title></page-title><class-card></class-card><page-footer></page-footer></div><scroll-bar></scroll-bar></div>
<task-bar></task-bar>`);
</script>
</body>
</html>
